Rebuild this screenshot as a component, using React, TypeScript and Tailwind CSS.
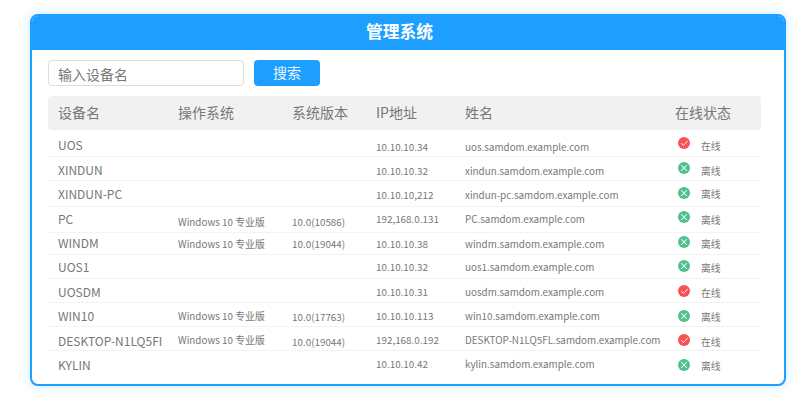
import { Check, X } from "lucide-react"

const font = "font-['Noto_Sans_CJK_SC','Noto_Sans',sans-serif]"

const win = "Windows 10 专业版"

// the source table is uneven: every cell sits a little differently, hence the per-row paddings
const rows = [
    { name: "UOS", os: "", ver: "", ip: "10.10.10.34", host: "uos.samdom.example.com", online: true, h: "h-[27px]", pn: "pt-[7px]", po: "pt-[8px]", pv: "pt-[8px]", pi: "pt-[10px]", ps: "pt-[9px]", pc: "pt-[7px]" },
    { name: "XINDUN", os: "", ver: "", ip: "10.10.10.32", host: "xindun.samdom.example.com", online: false, h: "h-[24px]", pn: "pt-[5px]", po: "pt-[6px]", pv: "pt-[6px]", pi: "pt-[7px]", ps: "pt-[7px]", pc: "pt-[5px]" },
    { name: "XINDUN-PC", os: "", ver: "", ip: "10.10.10,212", host: "xindun-pc.samdom.example.com", online: false, h: "h-[26px]", pn: "pt-[5px]", po: "pt-[5px]", pv: "pt-[5px]", pi: "pt-[7px]", ps: "pt-[6px]", pc: "pt-[6px]" },
    { name: "PC", os: win, ver: "10.0(10586)", ip: "192,168.0.131", host: "PC.samdom.example.com", online: false, h: "h-[26px]", pn: "pt-[4px]", po: "pt-[8px]", pv: "pt-[8px]", pi: "pt-[5px]", ps: "pt-[6px]", pc: "pt-[4px]" },
    { name: "WINDM", os: win, ver: "10.0(19044)", ip: "10.10.10.38", host: "windm.samdom.example.com", online: false, h: "h-[22px]", pn: "pt-[2px]", po: "pt-[4px]", pv: "pt-[4px]", pi: "pt-[4px]", ps: "pt-[4px]", pc: "pt-[3px]" },
    { name: "UOS1", os: "", ver: "", ip: "10.10.10.32", host: "uos1.samdom.example.com", online: false, h: "h-[24px]", pn: "pt-[4px]", po: "pt-[5px]", pv: "pt-[5px]", pi: "pt-[5px]", ps: "pt-[6px]", pc: "pt-[5px]" },
    { name: "UOSDM", os: "", ver: "", ip: "10.10.10.31", host: "uosdm.samdom.example.com", online: true, h: "h-[24px]", pn: "pt-[5px]", po: "pt-[5px]", pv: "pt-[5px]", pi: "pt-[6px]", ps: "pt-[7px]", pc: "pt-[6px]" },
    { name: "WIN10", os: win, ver: "10.0(17763)", ip: "10.10.10.113", host: "win10.samdom.example.com", online: false, h: "h-[24px]", pn: "pt-[5px]", po: "pt-[6px]", pv: "pt-[7px]", pi: "pt-[6px]", ps: "pt-[7px]", pc: "pt-[7px]" },
    { name: "DESKTOP-N1LQ5FI", os: win, ver: "10.0(19044)", ip: "192,168.0.192", host: "DESKTOP-N1LQ5FL.samdom.example.com", online: true, h: "h-[24px]", pn: "pt-[6px]", po: "pt-[6px]", pv: "pt-[8px]", pi: "pt-[6px]", ps: "pt-[8px]", pc: "pt-[7px]" },
    { name: "KYLIN", os: "", ver: "", ip: "10.10.10.42", host: "kylin.samdom.example.com", online: false, h: "h-[24px]", pn: "pt-[6px]", po: "pt-[6px]", pv: "pt-[6px]", pi: "pt-[6px]", ps: "pt-[8px]", pc: "pt-[8px]" },
]

const columns = "grid grid-cols-[120px_114px_84px_89px_220px_86px]"

function StatusIcon({ online }: { online: boolean }) {
    return online ? (
        <span className="flex h-[12px] w-[12px] items-center justify-center rounded-full bg-[#fa5058]">
            <Check className="h-[9px] w-[9px] text-white" strokeWidth={2.5} />
        </span>
    ) : (
        <span className="flex h-[12px] w-[12px] items-center justify-center rounded-full bg-[#4cc28c]">
            <X className="h-[10px] w-[10px] text-white" strokeWidth={2.5} />
        </span>
    )
}

export default function App() {
    return (
        <div className={`h-[400px] w-[800px] bg-white pl-[30px] pt-[14px] ${font}`}>
            <div className="h-[372px] w-[756px] overflow-hidden rounded-lg border-2 border-[#1e9fff] bg-white shadow-[0_0_10px_rgba(30,159,255,0.25)]">
                <div className="-mx-[2px] -mt-[2px] flex h-[36px] items-center justify-center bg-[#1e9fff] pr-[17px] text-[16.8px] font-bold text-white">
                    管理系统
                </div>
                <div className="pl-[16px] pt-[10px]">
                    <div className="flex gap-[10px]">
                        <div className="flex h-[26px] w-[196px] items-center rounded-sm border border-[#dddddd] pl-[9px] pt-[2px] text-[14px] text-[#777]">
                            输入设备名
                        </div>
                        <button className="h-[26px] w-[66px] rounded-sm bg-[#1e9fff] pb-[2px] text-[14px] text-[#e8f5ff]">搜索</button>
                    </div>
                    <div className={`${columns} mt-[10px] h-[34px] w-[713px] items-center rounded-sm bg-[#f1f1f1] pb-[2px] text-[14px] text-[#777]`}>
                        <div className="pl-[10px]">设备名</div>
                        <div className="pl-[10px]">操作系统</div>
                        <div className="pl-[10px]">系统版本</div>
                        <div className="pl-[10px]">IP地址</div>
                        <div className="pl-[10px]">姓名</div>
                        <div>在线状态</div>
                    </div>
                    {rows.map((row) => (
                        <div
                            key={row.name}
                            className={`${columns} w-[713px] items-start border-b border-[#f3f3f3] text-[9.85px] leading-[14px] text-[#777] last:border-b-0 ${row.h}`}
                        >
                            <div className={`pl-[10px] text-[12px] leading-[16px] ${row.pn}`}>{row.name}</div>
                            <div className={`pl-[10px] ${row.po}`}>{row.os}</div>
                            <div className={`pl-[10px] ${row.pv}`}>{row.ver}</div>
                            <div className={`pl-[10px] ${row.pi}`}>{row.ip}</div>
                            <div className={`whitespace-nowrap pl-[10px] ${row.pi}`}>{row.host}</div>
                            <div className="flex items-start gap-[11px] pl-[3px]">
                                <div className={row.pc}>
                                    <StatusIcon online={row.online} />
                                </div>
                                <span className={row.ps}>{row.online ? "在线" : "离线"}</span>
                            </div>
                        </div>
                    ))}
                </div>
            </div>
        </div>
    )
}
